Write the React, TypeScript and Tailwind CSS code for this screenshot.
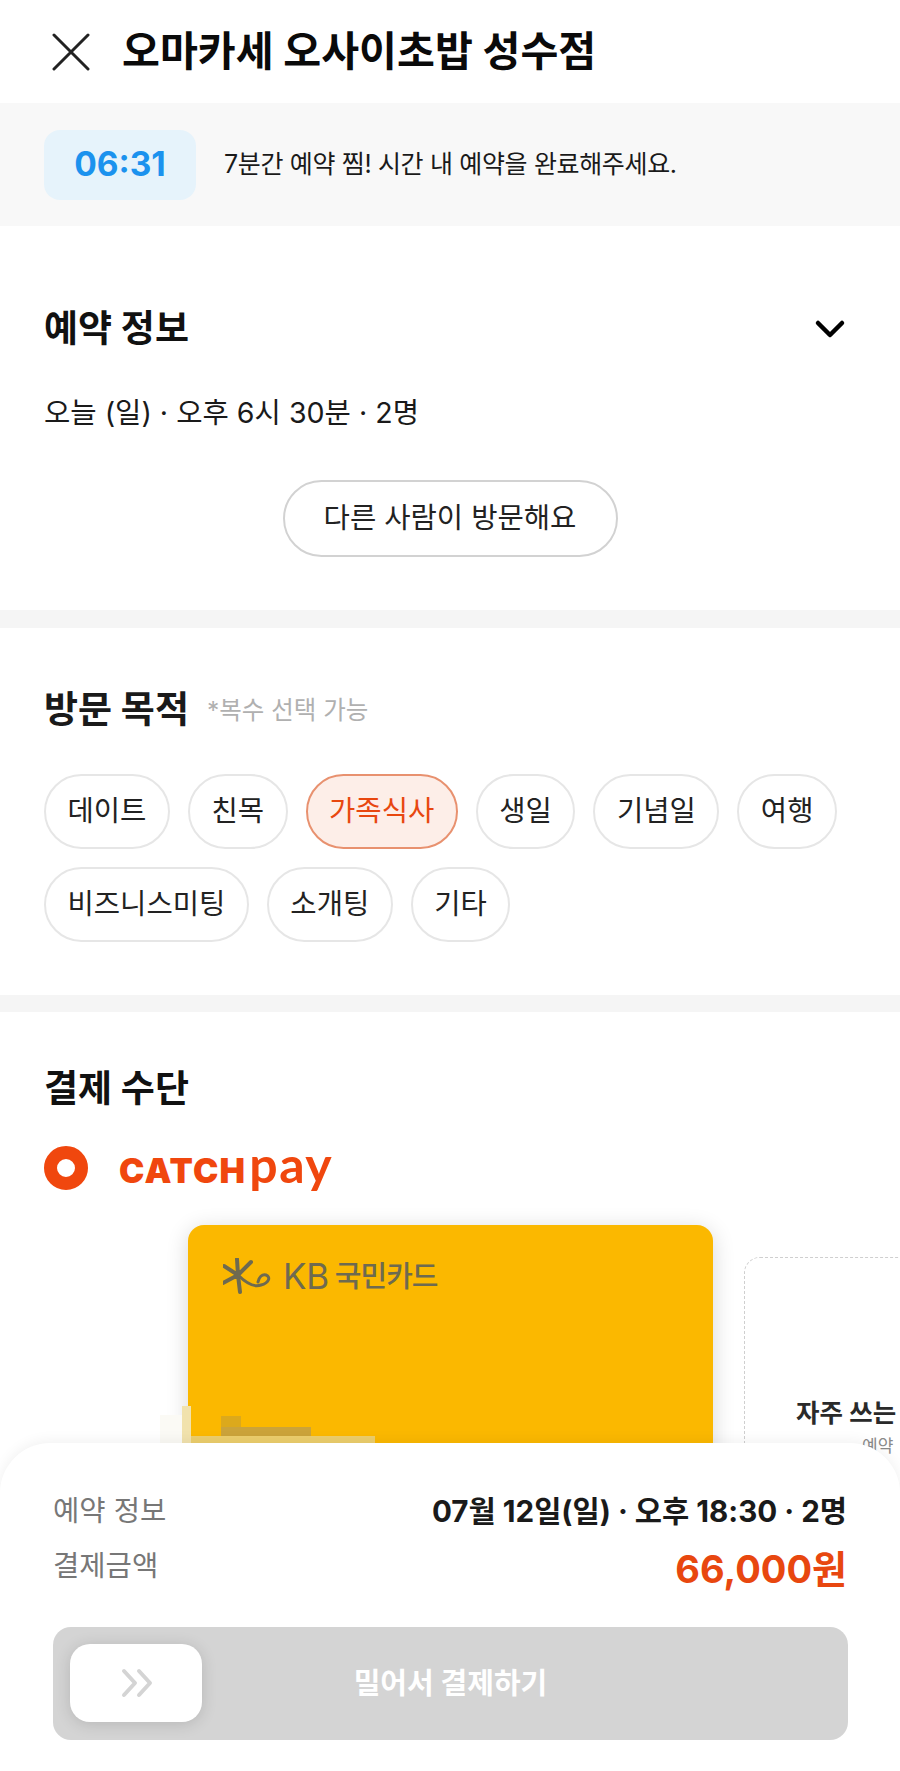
import React from "react";

const row1 = ["데이트", "친목", "가족식사", "생일", "기념일", "여행"];
const row2 = ["비즈니스미팅", "소개팅", "기타"];

function Chip({ label }: { label: string }) {
  const active = label === "가족식사";
  return (
    <div
      className={
        active
          ? "flex h-[75px] items-center rounded-full border-2 border-[#e8916f] bg-[#fdeee8] px-[21.5px] text-[28.6px] text-[#e8470f]"
          : "flex h-[75px] items-center rounded-full border-2 border-[#e6e6e6] bg-white px-[21.5px] text-[28.6px] text-[#222222]"
      }
    >
      {label}
    </div>
  );
}

export default function App() {
  return (
    <div className="relative h-[1771px] w-full overflow-hidden bg-white font-['Inter','Noto_Sans_CJK_KR',sans-serif] text-[#111111]">
      <header className="flex h-[103px] items-center pl-[52px]">
        <svg width="38" height="38" viewBox="0 0 38 38" fill="none" stroke="#222222" strokeWidth="3" strokeLinecap="round">
          <path d="M2 2L36 36M36 2L2 36" />
        </svg>
        <h1 className="ml-[32px] text-[41.2px] font-bold text-[#0a0a0a]">오마카세 오사이초밥 성수점</h1>
      </header>

      <div className="flex h-[123px] items-center bg-[#f8f8f8] pl-[44px]">
        <div className="flex h-[70px] w-[152px] items-center justify-center rounded-[16px] bg-[#e6f3fb] text-[33.5px] font-bold text-[#1b92ee]">06:31</div>
        <p className="ml-[28px] text-[25px] tracking-[-0.35px] text-[#1a1a1a]">7분간 예약 찜! 시간 내 예약을 완료해주세요.</p>
      </div>

      <section className="flex h-[384px] flex-col px-[44px] pt-[77px]">
        <div className="flex h-[52px] items-center justify-between pr-[10px]">
          <h2 className="text-[37px] font-bold">예약 정보</h2>
          <svg width="32" height="20" viewBox="0 0 32 20" fill="none" stroke="#000000" strokeWidth="4.5" strokeLinecap="round" strokeLinejoin="round">
            <path d="M4 4L16 16L28 4" />
          </svg>
        </div>
        <p className="mt-[37px] text-[28.6px] text-[#1a1a1a]">오늘 (일) · 오후 6시 30분 · 2명</p>
        <div className="mt-[45px] flex justify-center">
          <div className="flex h-[77px] w-[335px] items-center justify-center rounded-full border-2 border-[#d2d2d2] text-[28.6px] text-[#222222]">다른 사람이 방문해요</div>
        </div>
      </section>

      <div className="h-[18px] bg-[#f5f5f5]" />

      <section className="h-[367px] px-[44px] pt-[56px]">
        <div className="flex h-[52px] items-center">
          <h2 className="text-[37px] font-bold text-[#1a1a1a]">방문 목적</h2>
          <span className="ml-[18px] text-[24.5px] text-[#b0b0b0]">*복수 선택 가능</span>
        </div>
        <div className="mt-[38px] flex flex-col gap-[18px]">
          <div className="flex gap-[18px]">
            {row1.map((l) => (
              <Chip key={l} label={l} />
            ))}
          </div>
          <div className="flex gap-[18px]">
            {row2.map((l) => (
              <Chip key={l} label={l} />
            ))}
          </div>
        </div>
      </section>

      <div className="h-[17px] bg-[#f5f5f5]" />

      <section className="pt-[51px]">
        <h2 className="px-[44px] text-[37px] font-bold leading-[52px]">결제 수단</h2>
        <div className="mt-[31px] flex h-[44px] items-center pl-[44px]">
          <div className="h-[44px] w-[44px] rounded-full border-[13px] border-[#f0470e]" />
          <div className="mb-[8px] ml-[31px] flex items-baseline text-[#f0470e]">
            <span className="text-[34px] font-black leading-none tracking-[1.2px]">CATCH</span>
            <span className="ml-[3px] font-['Lato',sans-serif] text-[50px] font-bold leading-none tracking-[1.5px]">pay</span>
          </div>
        </div>

        <div className="mt-[35px] flex gap-[31px] pl-[188px]">
          <div className="relative h-[330px] w-[525px] shrink-0 rounded-[16px] bg-[#fbb800] shadow-[0_4px_22px_rgba(0,0,0,0.16)]">
            <div className="flex items-center pl-[35px] pt-[33px] text-[#6e6a50]">
              <svg width="50" height="36" viewBox="0 0 50 36" fill="none" stroke="#6e6a50" strokeWidth="4" strokeLinecap="round">
                <path d="M15 17L1 8M15 17L0 25M15 17L14 1M15 17L17 34M15 17L28 4" />
                <path strokeWidth="3" d="M15 17C22 24 30 30 38 27C46 25 48 19 43 17C39 16 36 19 35 24" />
              </svg>
              <span className="ml-[10px] text-[35px] leading-none tracking-[-0.3px]">KB</span>
              <span className="ml-[6px] text-[29px] font-medium leading-none tracking-[-1px]">국민카드</span>
            </div>
          </div>
          <div className="h-[300px] w-[525px] shrink-0 translate-y-[32px] rounded-[16px] border border-dashed border-[#cfcfcf] bg-white pl-[51px] pt-[135px]">
            <p className="text-[25.5px] font-semibold leading-[40px] text-[#2a2a2a] whitespace-nowrap">자주 쓰는</p>
            <p className="pl-[66px] text-[17px] leading-[26px] text-[#8a8a8a]">예약</p>
          </div>
        </div>
      </section>

      {/* 흐림 처리된 카드 번호 */}
      <div className="absolute left-[182px] top-[1406px] h-[40px] w-[9px] bg-[#f1e2ad]" />
      <div className="absolute left-[160px] top-[1415px] h-[30px] w-[22px] bg-[#fbfaf5]" />
      <div className="absolute left-[221px] top-[1416px] h-[11px] w-[20px] bg-[#dca91c]" />
      <div className="absolute left-[221px] top-[1427px] h-[10px] w-[90px] bg-[#cba33a]" />
      <div className="absolute left-[191px] top-[1436px] h-[9px] w-[184px] bg-[#ecce6c]" />

      <div className="absolute inset-x-0 bottom-0 h-[328px] rounded-t-[50px] bg-white pl-[53px] pr-[52px] shadow-[0_-2px_14px_rgba(0,0,0,0.06)]">
        <div className="mt-[35px] flex h-[50px] items-center justify-between pt-[17px] pr-[1px]">
          <span className="text-[28.6px] text-[#777777]">예약 정보</span>
          <span className="text-[29.6px] font-bold text-[#1a1a1a]">07월 12일(일) · 오후 18:30 · 2명</span>
        </div>
        <div className="mt-[12px] flex items-start justify-between pr-[1px]">
          <span className="mt-[5px] text-[28.6px] text-[#777777]">결제금액</span>
          <span className="text-[38px] font-bold leading-[58px] text-[#e8470f]">66,000원</span>
        </div>
        <div className="relative mt-[29px] flex h-[113px] items-center justify-center rounded-[18px] bg-[#d4d4d4]">
          <div className="absolute left-[17px] top-[17px] flex h-[78px] w-[132px] items-center justify-center rounded-[20px] bg-white shadow-[0_2px_16px_rgba(0,0,0,0.14)]">
            <svg width="34" height="30" viewBox="0 0 34 30" fill="none" stroke="#d4d4d4" strokeWidth="4" strokeLinecap="round" strokeLinejoin="round">
              <path d="M5 3L16 15L5 27M20 3L31 15L20 27" />
            </svg>
          </div>
          <span className="text-[29px] font-bold text-white">밀어서 결제하기</span>
        </div>
      </div>
    </div>
  );
}
